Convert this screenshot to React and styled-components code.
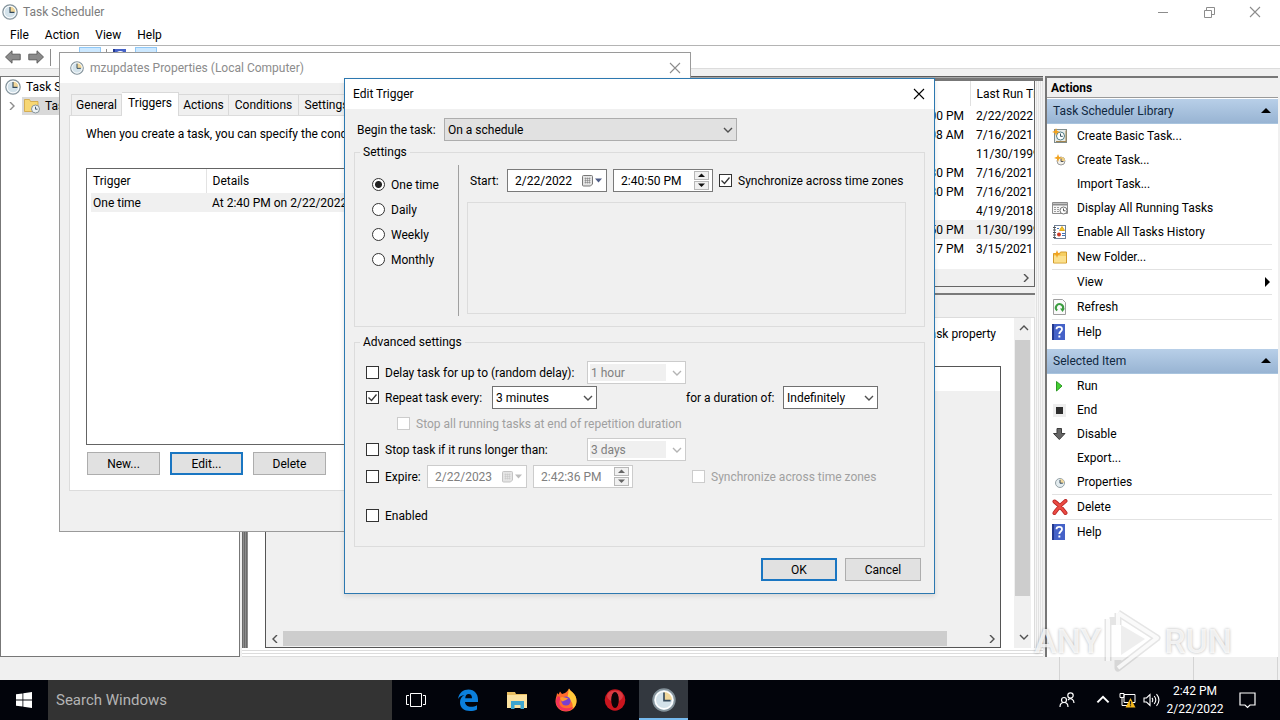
import React from "react";
import styled, { createGlobalStyle, css } from "styled-components";

const FONT = 'Roboto, "Noto Sans", sans-serif';

const GlobalStyle = createGlobalStyle`
  * {
    box-sizing: border-box;
  }

  body {
    margin: 0;
    overflow: hidden;
    font-family: ${FONT};
    font-size: 12px;
    line-height: 16px;
    color: #000;
  }

  button,
  input,
  select {
    font: inherit;
    color: inherit;
    margin: 0;
  }

  svg {
    display: block;
    flex: none;
  }
`;

/* ---------- desktop ---------- */

const Desktop = styled.div`
  position: relative;
  display: flex;
  flex-direction: column;
  height: 100vh;
  overflow: hidden;
  background: #f0f0f0;
`;

const MainWindow = styled.div`
  flex: 1;
  min-height: 0;
  display: flex;
  flex-direction: column;
`;

const TitleBar = styled.header`
  display: flex;
  align-items: center;
  gap: 5px;
  height: 24px;
  padding: 0 2px;
  background: #fff;
  color: #7c7c7c;
`;

const WindowControls = styled.div`
  display: flex;
  margin-left: auto;
`;

const ControlButton = styled.button`
  display: flex;
  align-items: center;
  justify-content: center;
  width: 46px;
  height: 22px;
  padding: 0;
  border: none;
  background: none;
`;

const MenuBar = styled.nav`
  display: flex;
  gap: 16px;
  height: 22px;
  padding: 2px 10px;
  background: #fff;
  border-bottom: 1px solid #b4b4b4;
`;

const MenuItem = styled.button`
  padding: 0;
  border: none;
  background: none;
`;

const Toolbar = styled.div`
  display: flex;
  align-items: center;
  gap: 5px;
  height: 23px;
  padding: 0 4px;
  background: #fff;
  border-bottom: 1px solid #dcdcdc;
`;

const ToolButton = styled.button`
  display: flex;
  align-items: center;
  justify-content: center;
  width: ${(p) => (p.$wide ? "22px" : "18px")};
  height: 21px;
  padding: 0;
  border: 1px solid ${(p) => (p.$active ? "#90c8f6" : "transparent")};
  background: ${(p) => (p.$active ? "#cce8ff" : "none")};
`;

const ToolDivider = styled.span`
  width: 1px;
  height: 17px;
  background: #8c8c8c;
`;

const Panes = styled.div`
  flex: 1;
  min-height: 0;
  display: grid;
  grid-template-columns: 240px minmax(0, 1fr) 235px;
  column-gap: 2px;
  padding-top: 7px;
`;

/* ---------- tree ---------- */

const TreePane = styled.div`
  background: #fff;
  border: 1px solid #777;
`;

const TreeRow = styled.div`
  display: flex;
  align-items: center;
  height: 19px;
  padding-left: ${(p) => (p.$nested ? "6px" : "2px")};
  white-space: nowrap;
`;

const TreeLabel = styled.span`
  display: flex;
  align-items: center;
  gap: 5px;
  height: 18px;
  margin-left: ${(p) => (p.$selected ? "5px" : "0")};
  padding: 0 2px;
  background: ${(p) => (p.$selected ? "#d9d9d9" : "none")};
`;

/* ---------- centre ---------- */

const CenterFrame = styled.div`
  display: flex;
  flex-direction: column;
  min-height: 0;
  padding: 5px 8px 9px 6px;
  background:
    linear-gradient(#5e5e5e 0 1px, #a8a8a8 1px 2px, #777 2px 5px) top / 100% 5px no-repeat,
    repeating-linear-gradient(#fff 0 2px, #dcdcdc 2px 3px) bottom / 100% 9px no-repeat,
    repeating-linear-gradient(90deg, #6a6a6a 0 1px, #8c8c8c 1px 2px) left / 6px 100% no-repeat,
    repeating-linear-gradient(90deg, #f6f6f6 0 1px, #e2e2e2 1px 2px) right / 8px 100% no-repeat;
`;

const ListPane = styled.div`
  display: flex;
  flex-direction: column;
  height: 206px;
  background: #fff;
  border-right: 1px solid #666;
  border-bottom: 1px solid #666;
`;

const TableArea = styled.div`
  flex: 1;
  overflow: hidden;
`;

const TaskTable = styled.table`
  width: 100%;
  table-layout: fixed;
  border-collapse: collapse;
  white-space: nowrap;

  th,
  td {
    padding: 0 6px;
    height: 19px;
    font-weight: 400;
    text-align: left;
    overflow: hidden;
  }

  th {
    height: 25px;
    border-right: 1px solid #e0e0e0;
  }

  th:last-child {
    border-right: none;
  }

  td:nth-child(2) {
    text-align: right;
  }
`;

const TaskRow = styled.tr`
  background: ${(p) => (p.$selected ? "#f0f0f0" : "none")};
`;

const HScroll = styled.div`
  display: flex;
  align-items: center;
  height: 17px;
  background: #f0f0f0;
`;

const HThumb = styled.div`
  flex: 1;
  height: 15px;
  margin-right: 36px;
  background: ${(p) => (p.$hidden ? "none" : "#cdcdcd")};
`;

const ScrollButton = styled.button`
  display: flex;
  align-items: center;
  justify-content: center;
  width: 17px;
  height: 17px;
  padding: 0;
  border: none;
  background: none;
`;

const DetailPane = styled.div`
  flex: 1;
  min-height: 0;
  display: flex;
  flex-direction: column;
  margin-top: 6px;
  padding-top: 22px;
  background: #f0f0f0;
  border-top: 2px solid #7a7a7a;
`;

const DetailScroll = styled.div`
  flex: 1;
  min-height: 0;
  display: flex;
  background: #fff;
  border: 1px solid #dcdcdc;
  border-left: none;
  border-bottom: none;
  padding-right: 3px;
`;

const DetailBody = styled.div`
  flex: 1;
  display: flex;
  flex-direction: column;
  padding: 0 13px 0 17px;
`;

const DetailNote = styled.p`
  height: 48px;
  margin: 0;
  padding: 8px 5px 0;
  text-align: right;
`;

const DetailList = styled.div`
  flex: 1;
  display: flex;
  flex-direction: column;
  justify-content: space-between;
  border: 1px solid #555;
  background: #f0f0f0;
`;

const DetailHeader = styled.div`
  height: 24px;
  background: #fff;
`;

const VScroll = styled.div`
  display: flex;
  flex-direction: column;
  width: 17px;
  padding: 1px 1px 3px;
  background: #f0f0f0;
`;

const VThumb = styled.div`
  flex: 1;
  margin: 4px 0 32px;
  background: #cdcdcd;
`;

/* ---------- actions ---------- */

const ActionsPane = styled.aside`
  margin-right: 2px;
  background: #fff;
  border-top: 2px solid #777;
  border-left: 2px solid #777;
`;

const ActionsTitle = styled.h2`
  height: 20px;
  margin: 0 0 1px;
  padding: 2px 4px;
  font-size: 12px;
  line-height: 16px;
  font-weight: 700;
  background: #f0f0f0;
  border-bottom: 1px solid #9a9a9a;
`;

const SectionHeader = styled.button`
  display: flex;
  align-items: center;
  justify-content: space-between;
  width: 100%;
  height: 25px;
  padding: 0 7px 0 6px;
  border: none;
  border-bottom: 1px solid #a9c4de;
  background: linear-gradient(#b8cfe8, #98b4d3);
  color: #10283f;
`;

const ActionList = styled.ul`
  margin: 0 6px ${(p) => (p.$last ? "0" : "5px")} 5px;
  padding: 0;
  list-style: none;
`;

const ActionItem = styled.li`
  border-top: ${(p) => (p.$separated ? "1px solid #e2e2e2" : "none")};
`;

const ActionButton = styled.button`
  display: grid;
  grid-template-columns: 16px 1fr auto;
  align-items: center;
  column-gap: 9px;
  width: 100%;
  height: 24px;
  padding: 0;
  border: none;
  background: none;
  text-align: left;
`;

const StatusBar = styled.footer`
  display: grid;
  grid-template-columns: 1fr 134px 84px 2px;
  height: 23px;
`;

const StatusCell = styled.span`
  border-right: 1px solid #d4d4d4;
`;

/* ---------- dialogs ---------- */

const Dialog = styled.section`
  position: absolute;
  background: #f0f0f0;
`;

const PropertiesDialog = styled(Dialog)`
  left: 59px;
  top: 52px;
  width: 632px;
  height: 480px;
  border: 1px solid #9a9a9a;
`;

const TriggerDialog = styled(Dialog)`
  left: 344px;
  top: 78px;
  width: 591px;
  border: 1px solid #2c78b0;
  box-shadow: 0 2px 5px rgba(0, 0, 0, 0.12);
`;

const DialogTitle = styled.header`
  display: flex;
  align-items: center;
  gap: ${(p) => (p.$inactive ? "6px" : "0")};
  height: 30px;
  padding: 0 8px 0 ${(p) => (p.$inactive ? "10px" : "8px")};
  background: #fff;
  color: ${(p) => (p.$inactive ? "#8c8c8c" : "#000")};
`;

const CloseButton = styled.button`
  display: flex;
  align-items: center;
  justify-content: center;
  width: 14px;
  height: 20px;
  margin-left: auto;
  padding: 0;
  border: none;
  background: none;
`;

const Tabs = styled.div`
  display: flex;
  align-items: flex-end;
  height: 32px;
  padding-left: 11px;
`;

const Tab = styled.button`
  flex: none;
  width: ${(p) => p.$width}px;
  height: 21px;
  padding: 0;
  border: 1px solid #d9d9d9;
  border-left-width: ${(p) => (p.$first ? "1px" : "0")};
  border-bottom: none;
  background: #f0f0f0;

  ${(p) =>
    p.$selected &&
    css`
      height: 24px;
      padding-bottom: 4px;
      margin-bottom: -1px;
      background: #fff;
      z-index: 1;
    `}
`;

const TabPage = styled.div`
  height: 376px;
  margin: 0 9px;
  padding: 10px 16px;
  background: #fff;
  border: 1px solid #dcdcdc;
`;

const TabNote = styled.p`
  margin: 0 0 26px;
  white-space: nowrap;
`;

const TriggerList = styled.div`
  height: 277px;
  padding-left: 4px;
  border: 1px solid #646464;
`;

const TriggerTable = styled.table`
  width: 100%;
  table-layout: fixed;
  border-collapse: collapse;
  white-space: nowrap;

  th,
  td {
    height: 19px;
    padding: 0 2px;
    font-weight: 400;
    text-align: left;
  }

  th {
    height: 24px;
  }

  th + th,
  td + td {
    padding-left: 6px;
  }

  th + th {
    border-left: 1px solid #e3e3e3;
  }

  td {
    background: #f0f0f0;
  }
`;

const ButtonRow = styled.div`
  display: flex;
  gap: ${(p) => p.$gap}px;
  justify-content: ${(p) => (p.$end ? "flex-end" : "flex-start")};
  padding: ${(p) => (p.$end ? "11px 4px 12px" : "7px 1px 0")};
`;

const PushButton = styled.button`
  width: ${(p) => (p.$wide ? "76px" : "73px")};
  height: 23px;
  padding: 0;
  background: #e1e1e1;
  border: ${(p) => (p.$primary ? "2px solid #1a76c2" : "1px solid #adadad")};
`;

const TriggerForm = styled.form`
  padding: 9px 9px 0;
`;

const FieldRow = styled.div`
  display: flex;
  align-items: center;
  height: 23px;
  margin-left: ${(p) => p.$indent || 0}px;
  margin-bottom: ${(p) => p.$below || 0}px;
  white-space: nowrap;
`;

const FieldLabel = styled.label`
  flex: none;
  width: ${(p) => p.$width}px;
  margin-left: ${(p) => p.$before || 0}px;
`;

const Group = styled.fieldset`
  min-width: 0;
  margin: ${(p) => p.$above}px 0 0;
  padding: 0;
  border: 1px solid #dcdcdc;
`;

const Legend = styled.legend`
  height: 16px;
  margin-left: 5px;
  padding: 0 3px;
`;

const SettingsBody = styled.div`
  display: flex;
  padding-bottom: 10px;
`;

const RadioColumn = styled.div`
  flex: none;
  width: 103px;
  padding: 12px 0 0 17px;
`;

const Choice = styled.label`
  display: flex;
  align-items: center;
  gap: 6px;
  flex: none;
  width: ${(p) => (p.$width ? p.$width + "px" : "auto")};
  height: ${(p) => (p.$tall ? "25px" : "23px")};
  margin-left: ${(p) => p.$before || 0}px;
  color: ${(p) => (p.$disabled ? "#a0a0a0" : "#000")};
`;

const Radio = styled.input`
  appearance: none;
  width: 13px;
  height: 13px;
  border: 1px solid #333;
  border-radius: 50%;
  background: #fff;

  &:checked {
    background: radial-gradient(circle, #222 0 3px, #fff 4px);
  }
`;

const CheckInput = styled.input`
  appearance: none;
  width: 13px;
  height: 13px;
  border: 1px solid #333;
  background: #fff;

  &:checked {
    background: #fff
      url("data:image/svg+xml,%3Csvg xmlns='http://www.w3.org/2000/svg' viewBox='0 0 11 11'%3E%3Cpath d='M1.5 5.5l3 3 5-6' fill='none' stroke='%23333' stroke-width='1.3'/%3E%3C/svg%3E");
  }

  &:disabled {
    border-color: #ccc;
  }
`;

const SchedulePane = styled.div`
  flex: 1;
  min-width: 0;
  margin: 5px 18px 0 0;
  padding: 4px 0 2px 8px;
  border-left: 1px solid #a0a0a0;
`;

const EmptyFrame = styled.div`
  height: 112px;
  margin-top: 10px;
  border: 1px solid #dcdcdc;
`;

const AdvancedBody = styled.div`
  padding: 11px 11px 19px;
`;

const SelectBox = styled.div`
  position: relative;
  flex: none;
  width: ${(p) => p.$width}px;
  height: 23px;

  svg {
    position: absolute;
    right: 4px;
    top: 8px;
    pointer-events: none;
  }
`;

const SelectInput = styled.select`
  appearance: none;
  width: 100%;
  height: 23px;
  padding: 0 20px 0 3px;
  border: 1px solid ${(p) => (p.$flat ? "#adadad" : "#707070")};
  border-radius: 0;
  background: ${(p) => (p.$flat ? "#e1e1e1" : "#fff")};

  &:disabled {
    opacity: 1;
    color: #808080;
    border-color: #ccc;
    background: linear-gradient(#f0f0f0, #f0f0f0) 2px 2px / 76px 17px no-repeat #fff;
  }
`;

const PickerBox = styled.div`
  display: flex;
  align-items: center;
  flex: none;
  width: 100px;
  height: 23px;
  margin-right: 6px;
  padding-right: 3px;
  background: #fff;
  border: 1px solid ${(p) => (p.$disabled ? "#ccc" : "#7a7a7a")};
  color: ${(p) => (p.$disabled ? "#808080" : "#000")};
`;

const PickerInput = styled.input`
  flex: 1;
  min-width: 0;
  padding: 0 0 0 7px;
  border: none;
  background: none;
`;

const CalendarButton = styled.button`
  display: flex;
  align-items: center;
  padding: 0;
  border: none;
  background: none;
`;

const Spinner = styled.span`
  display: flex;
  flex-direction: column;
  gap: 1px;
`;

const SpinButton = styled.button`
  display: flex;
  align-items: center;
  justify-content: center;
  width: 15px;
  height: 9px;
  padding: 0;
  border: 1px solid #b8b8b8;
  background: #f0f0f0;
`;

/* ---------- watermark ---------- */

const Watermark = styled.div`
  position: absolute;
  right: 48px;
  bottom: 48px;
  display: flex;
  align-items: center;
  gap: 3px;
  font-family: "Liberation Sans Narrow", Roboto, sans-serif;
  font-size: 34px;
  font-weight: 500;
  line-height: 62px;
  color: rgba(255, 255, 255, 0.8);
  text-shadow: 0 0 3px rgba(0, 0, 0, 0.3);
  pointer-events: none;
`;

/* ---------- taskbar ---------- */

const Taskbar = styled.div`
  display: flex;
  height: 40px;
  background: #02040b;
  color: #fff;
`;

const TaskbarApps = styled.div`
  display: flex;
  margin-left: 3px;
`;

const TaskbarButton = styled.button`
  display: flex;
  align-items: center;
  justify-content: center;
  width: ${(p) => p.$width || 49}px;
  height: 40px;
  padding: ${(p) => (p.$active ? "2px 0 0" : "0")};
  border: none;
  border-bottom: ${(p) => (p.$active ? "2px solid #76b9ed" : "none")};
  background: ${(p) => (p.$active ? "#33383f" : "none")};
`;

const SearchBox = styled.input`
  width: 344px;
  padding: 0 8px;
  border: none;
  background: #333;
  font-size: 15px;

  &::placeholder {
    color: #b4b4b4;
    opacity: 1;
  }
`;

const Tray = styled.div`
  display: flex;
  align-items: center;
  margin-left: auto;
  padding-right: 13px;
`;

const Clock = styled.time`
  width: 64px;
  line-height: 18px;
  text-align: center;
`;

/* ---------- icons ---------- */

const ClockIcon = ({ size = 16 }) => (
  <svg width={size} height={size} viewBox="0 0 16 16">
    <circle cx="8" cy="8" r="7.2" fill="#d3e2ea" stroke="#84929a" strokeWidth="1.2" />
    <path d="M8 8V2a6 6 0 0 1 6 6z" fill="#f0d79b" />
    <circle cx="8" cy="8" r="5.8" fill="none" stroke="#fff" strokeWidth="0.9" />
    <path d="M8 3v5.4h4.4" fill="none" stroke="#34495a" strokeWidth="1.1" />
  </svg>
);

const CrossIcon = ({ color }) => (
  <svg width="12" height="12" viewBox="0 0 12 12">
    <path d="M1 1l10 10M11 1L1 11" stroke={color} strokeWidth="1.1" />
  </svg>
);

const ArrowIcon = ({ flip }) => (
  <svg width="16" height="14" viewBox="0 0 16 14">
    <path
      d={flip ? "M15.5 7L9 .8v3.4H.8v5.6H9v3.4z" : "M.5 7L7 .8v3.4h8.2v5.6H7v3.4z"}
      fill="#8b8b8b"
      stroke="#5f5f5f"
    />
  </svg>
);

const ChevronIcon = ({ dir = "down", color = "#505050", size = 10 }) => {
  const turn = { down: 0, left: 90, up: 180, right: 270 }[dir];
  return (
    <svg width={size} height={size * 0.8} viewBox="0 0 10 8">
      <path d="M1 2l4 4 4-4" fill="none" stroke={color} strokeWidth="1.4" transform={`rotate(${turn} 5 4)`} />
    </svg>
  );
};

const TriangleIcon = ({ dir = "down", color = "#222", size = 7 }) => {
  const d = { up: "M0 7L5 2l5 5z", down: "M0 2l5 5 5-5z", right: "M3 0l5 5-5 5z" }[dir];
  return (
    <svg width={size} height={size} viewBox="0 0 10 10">
      <path d={d} fill={color} />
    </svg>
  );
};

const CalendarIcon = ({ color, grid }) => (
  <svg width="22" height="14" viewBox="0 0 22 14">
    <path d="M2.500 1.500h8q1 0 1 1v7.500l-2 2h-7q-1 0-1-1v-8.500q0-1 1-1z" fill="#e4e4e4" stroke={grid} />
    <path d="M3.500 4.500h6M3.500 6.500h6M3.500 8.500h6M4.500 3.500v6M6.500 3.500v6M8.500 3.500v6" stroke={grid} strokeWidth="0.5" />
    <path d="M14 4.500h7l-3.500 4z" fill={color} />
  </svg>
);

const TreeFolderIcon = () => (
  <svg width="16" height="16" viewBox="0 0 16 16">
    <path d="M.5 1.500h5l1 2h7.500v10H.5z" fill="#f7d774" stroke="#d0a33c" strokeWidth="0.8" />
    <circle cx="11.500" cy="11" r="4" fill="#eef3f5" stroke="#84929a" />
    <path d="M11.500 8.700v2.500h2" fill="none" stroke="#34495a" strokeWidth="0.9" />
  </svg>
);

const Star = () => <path d="M4 0l1 2.800L8 4 5 5 4 8 3 5 0 4l3-1.200z" fill="#f2a21c" />;

const BasicTaskIcon = () => (
  <svg width="16" height="16" viewBox="0 0 16 16">
    <rect x="2.500" y="1.500" width="12" height="13" fill="#e8ecea" stroke="#7f8b8c" />
    <path d="M4 13.500h10v-11" fill="none" stroke="#a4864f" />
    <circle cx="8.500" cy="8" r="4" fill="#fff" stroke="#4f7d86" />
    <path d="M8.500 5.500V8.300h2.300" fill="none" stroke="#33525e" />
    <Star />
  </svg>
);

const NewTaskIcon = () => (
  <svg width="16" height="16" viewBox="0 0 16 16">
    <circle cx="9" cy="9" r="4" fill="#f3f1ea" stroke="#9c9c9c" />
    <path d="M9 9V5a4 4 0 0 1 4 4z" fill="#f0cf80" />
    <path d="M9 6.500v3h2.500" fill="none" stroke="#555" />
    <g transform="translate(2 2)">
      <Star />
    </g>
  </svg>
);

const RunningIcon = () => (
  <svg width="16" height="16" viewBox="0 0 16 16">
    <path d="M.5 2.500h15v11H.5z" fill="#f5f5f5" stroke="#8c8c8c" />
    <path d="M1 4.500h14" stroke="#8c8c8c" strokeWidth="2" />
    <path d="M2 7.500h5M2 9.500h5M2 11.500h5" stroke="#9d9d9d" strokeDasharray="2 1" />
    <circle cx="11.500" cy="10.500" r="3.500" fill="#fff" stroke="#777" />
    <path d="M11.500 8.500v2.300h2" fill="none" stroke="#555" />
  </svg>
);

const HistoryIcon = () => (
  <svg width="16" height="16" viewBox="0 0 16 16">
    <rect x="2.500" y="1.500" width="11" height="13" fill="#fff" stroke="#6f8096" />
    <path d="M1 3.500h3M1 6h3M1 8.500h3M1 11h3M1 13.500h3" stroke="#555" />
    <path d="M10 2.500l2.500 4h-5z" fill="#f3c62c" stroke="#e0ab1a" />
    <circle cx="7" cy="10.500" r="2" fill="#cc3b26" />
    <path d="M5 4.500h2M10 9.500h3M10 11.500h3" stroke="#3f72b8" />
  </svg>
);

const NewFolderIcon = () => (
  <svg width="16" height="16" viewBox="0 0 16 16">
    <path d="M1.500 4.500h6l1-1.500h6v11h-13z" fill="#f6cf63" stroke="#d29b2d" />
    <path d="M2 7h12v6.500H2z" fill="#fbe08d" />
    <g transform="translate(1 1)">
      <Star />
    </g>
  </svg>
);

const RefreshIcon = () => (
  <svg width="16" height="16" viewBox="0 0 16 16">
    <path d="M1.500.500h9l3 3v12h-12z" fill="#fafafa" stroke="#9e9e9e" />
    <path d="M5.200 11.500A3.600 3.600 0 1 1 10.600 10.500" fill="none" stroke="#3b9c3f" strokeWidth="2" />
    <path d="M8 9.500h5L10.500 13z" fill="#3b9c3f" />
  </svg>
);

const HelpIcon = () => (
  <svg width="16" height="16" viewBox="0 0 16 16">
    <rect x="0" y="0" width="13" height="16" fill="#4562c8" />
    <path d="M1 0v16" stroke="#24398f" strokeWidth="2" />
    <path d="M4.500 5.200C4.500 2.200 10 2.200 10 5.200 10 7.500 7.300 7.500 7.300 10" fill="none" stroke="#fff" strokeWidth="1.800" />
    <rect x="6.400" y="11.500" width="1.900" height="2" fill="#fff" />
  </svg>
);

const RunIcon = () => (
  <svg width="16" height="16" viewBox="0 0 16 16">
    <path d="M4.500 3.500L10 8l-5.500 5z" fill="#45cf33" stroke="#2b9a23" />
  </svg>
);

const EndIcon = () => (
  <svg width="16" height="16" viewBox="0 0 16 16">
    <rect x="1" y="2" width="13" height="13" fill="#eee" />
    <rect x="4" y="5" width="7" height="7" fill="#2e2e2e" />
  </svg>
);

const DisableIcon = () => (
  <svg width="16" height="16" viewBox="0 0 16 16">
    <path d="M5 2.500h4.500v5h3.500L7.300 13.500 1.500 7.500H5z" fill="#666" stroke="#3c3c3c" />
  </svg>
);

const PropertiesIcon = () => (
  <svg width="16" height="16" viewBox="0 0 16 16">
    <circle cx="8" cy="9" r="4.500" fill="#e3ecef" stroke="#95a1a6" />
    <path d="M8 9V5a4 4 0 0 1 4 4z" fill="#f0d79b" />
    <path d="M8 6v3.200h2.800" fill="none" stroke="#34495a" />
  </svg>
);

const DeleteIcon = () => (
  <svg width="16" height="16" viewBox="0 0 16 16">
    <path d="M2.500 2.500C6 5 10 9.500 13.500 14M13.500 2C9 5.500 5.500 9.500 2.500 14" stroke="#b52424" strokeWidth="4" strokeLinecap="round" />
    <path d="M2.500 2.500C6 5 10 9.500 13.500 14M13.500 2C9 5.500 5.500 9.500 2.500 14" stroke="#ea4a42" strokeWidth="2.400" strokeLinecap="round" />
  </svg>
);

const PlayMark = () => (
  <svg width="57" height="62" viewBox="0 0 57 62" fill="none" strokeLinejoin="round">
    <path d="M14 3L53 28 14 58V50M14 3v12M4 9v42M9 7v8" stroke="rgba(0,0,0,.1)" strokeWidth="7" />
    <path d="M14 3L53 28 14 58M14 3v12M4 9v42" stroke="rgba(255,255,255,.8)" strokeWidth="4" />
    <path d="M17 15l24 14-24 16z" fill="rgba(222,222,222,.5)" />
  </svg>
);

const WindowsLogo = () => (
  <svg width="16" height="16" viewBox="0 0 16 16" fill="#fff">
    <path d="M0 2.300L6.500 1.400v6.200H0zM7.300 1.300L16 0v7.600H7.300zM0 8.400h6.500v6.200L0 13.700zM7.300 8.400H16V16l-8.700-1.300z" />
  </svg>
);

const TaskViewIcon = () => (
  <svg width="20" height="14" viewBox="0 0 20 14" fill="none" stroke="#fff">
    <path d="M4.500.500h11v13h-11zM3 2.500H.500v9H3M17 2.500h2.500v9H17" />
  </svg>
);

const EdgeIcon = () => (
  <svg width="22" height="22" viewBox="0 0 22 22">
    <path
      d="M1 10C2 3.500 6.500.500 11.500.500 17.500.500 21 5 21 10.500V13H8c.3 3.500 3.200 4.800 6 4.800 2.300 0 4.200-.6 6-1.600v4.200c-2 1-4.200 1.600-7 1.600C7 22 3 18.500 3 13.500 3 10 4.500 7.500 7.500 6 4.500 6.300 2.300 7.700 1 10zM8.200 9.200H15c0-2.600-1.200-4.200-3.300-4.200S8.400 6.600 8.200 9.200z"
      fill="#0b7fdb"
    />
  </svg>
);

const ExplorerIcon = () => (
  <svg width="22" height="20" viewBox="0 0 22 20">
    <path d="M1 2h8l1 2h11v14H1z" fill="#e9bf62" />
    <path d="M1 5h20v13H1z" fill="#fbe2a0" />
    <path d="M5 19v-8h13v8h-3.500v-4h-6v4z" fill="#3ea6cf" />
  </svg>
);

const FirefoxIcon = () => (
  <svg width="24" height="24" viewBox="0 0 24 24">
    <path d="M3 5l1.500 1.500L6 3.500 8 6l3-1C13 4 14 2 15 .500c1 3 7.500 5 7.500 12.500C22.500 19 18 23.500 12 23.500S1.500 19 1.500 13C1.500 9.500 3 7.500 3 5z" fill="#ff6b2c" />
    <path d="M15 .500c1 3 7.500 5 7.500 12.500 0 3-1.500 6-4 8 1-5-1-9-5.500-11 1.500-3 1-6 2-9.500z" fill="#ffc83a" />
    <path d="M2 15c1.500 6 6.500 8.500 11 8 3-.4 5-2 6-4-5 2-11 2-13-2-1.500-3 0-6 2-7L4 8c-1.500 2-2.500 4-2 7z" fill="#f4335a" />
    <circle cx="12" cy="13" r="4.600" fill="#7a3fd0" />
    <path d="M6 9.500c3-1.500 5 .5 8 .5-1 2.500-4 2-5 3.500C7.500 13 6 11.500 6 9.500z" fill="#ff9a2e" />
  </svg>
);

const OperaIcon = () => (
  <svg width="22" height="22" viewBox="0 0 22 22">
    <ellipse cx="11" cy="11" rx="10.300" ry="10.700" fill="#c9151e" />
    <ellipse cx="11" cy="7" rx="8" ry="5.500" fill="#e4555a" opacity="0.6" />
    <ellipse cx="11" cy="11" rx="3.800" ry="8" fill="#0a0407" />
  </svg>
);

const PeopleIcon = () => (
  <svg width="16" height="16" viewBox="0 0 16 16" fill="none" stroke="#fff" strokeWidth="1.200">
    <circle cx="5" cy="8" r="2.500" />
    <path d="M1 15c0-6 8-6 8 0" />
    <circle cx="11.500" cy="3.500" r="2.700" />
    <path d="M9 8c3-3 6 0 6 3" />
  </svg>
);

const NetworkIcon = () => (
  <svg width="17" height="16" viewBox="0 0 17 16">
    <path d="M5 2.500h11v8H5zM3 6v7.500h6M1 1.500h4v4H1z" fill="none" stroke="#fff" />
    <path d="M11.500 6l5 9.500h-10z" fill="#f5b81c" />
    <path d="M11.500 9v3.500M11.500 13.300v1" stroke="#222" strokeWidth="1.200" />
  </svg>
);

const VolumeIcon = () => (
  <svg width="17" height="14" viewBox="0 0 17 14" fill="none" stroke="#fff" strokeWidth="1.100">
    <path d="M1 5h2.500L7 1.500v11L3.500 9H1zM9 5c1 1 1 3 0 4M11.200 3c2 2.500 2 5.500 0 8M13.500 1.200c3 3.500 3 8 0 11.600" />
  </svg>
);

const NoticeIcon = () => (
  <svg width="17" height="17" viewBox="0 0 17 17" fill="none" stroke="#fff" strokeWidth="1.200">
    <path d="M1 1h15v12h-5L8.500 15.500 6 13H1z" />
  </svg>
);

/* ---------- data ---------- */

const tasks = [
  { next: "2/22/2022 3:00:00 PM", last: "2/22/2022 2:40:51 PM" },
  { next: "2/23/2022 1:10:08 AM", last: "7/16/2021 1:10:08 AM" },
  { next: "", last: "11/30/1999 12:00:00 AM" },
  { next: "2/22/2022 4:12:30 PM", last: "7/16/2021 1:12:30 PM" },
  { next: "2/22/2022 4:42:30 PM", last: "7/16/2021 1:42:30 PM" },
  { next: "", last: "4/19/2018 6:21:07 AM" },
  { next: "2/22/2022 2:40:50 PM", last: "11/30/1999 12:00:00 AM", selected: true },
  { next: "2/22/2022 5:01:17 PM", last: "3/15/2021 8:04:17 PM" },
];

const libraryActions = [
  { label: "Create Basic Task...", icon: <BasicTaskIcon /> },
  { label: "Create Task...", icon: <NewTaskIcon /> },
  { label: "Import Task..." },
  { label: "Display All Running Tasks", icon: <RunningIcon /> },
  { label: "Enable All Tasks History", icon: <HistoryIcon /> },
  { label: "New Folder...", icon: <NewFolderIcon />, separated: true },
  { label: "View", separated: true, submenu: true },
  { label: "Refresh", icon: <RefreshIcon />, separated: true },
  { label: "Help", icon: <HelpIcon />, separated: true },
];

const itemActions = [
  { label: "Run", icon: <RunIcon /> },
  { label: "End", icon: <EndIcon /> },
  { label: "Disable", icon: <DisableIcon /> },
  { label: "Export..." },
  { label: "Properties", icon: <PropertiesIcon /> },
  { label: "Delete", icon: <DeleteIcon />, separated: true },
  { label: "Help", icon: <HelpIcon />, separated: true },
];

const tabs = [
  { label: "General", width: 51 },
  { label: "Triggers", width: 57, selected: true },
  { label: "Actions", width: 50 },
  { label: "Conditions", width: 70 },
  { label: "Settings", width: 56 },
];

/* ---------- parts ---------- */

const Check = ({ label, checked, disabled, width, before }) => (
  <Choice $width={width} $before={before} $disabled={disabled}>
    <CheckInput type="checkbox" defaultChecked={checked} disabled={disabled} />
    {label}
  </Choice>
);

const Select = ({ id, label, value, width, flat, disabled }) => (
  <SelectBox $width={width}>
    <SelectInput id={id} aria-label={label} $flat={flat} disabled={disabled}>
      <option>{value}</option>
    </SelectInput>
    <ChevronIcon color={disabled ? "#b4b4b4" : "#505050"} />
  </SelectBox>
);

const DatePicker = ({ id, label, value, disabled }) => (
  <PickerBox $disabled={disabled}>
    <PickerInput id={id} aria-label={label} defaultValue={value} disabled={disabled} />
    <CalendarButton type="button" aria-label="Open calendar" disabled={disabled}>
      <CalendarIcon color={disabled ? "#bdbdbd" : "#4f5d86"} grid={disabled ? "#c4c4c4" : "#777"} />
    </CalendarButton>
  </PickerBox>
);

const TimePicker = ({ label, value, disabled }) => (
  <PickerBox $disabled={disabled}>
    <PickerInput aria-label={label} defaultValue={value} disabled={disabled} />
    <Spinner>
      <SpinButton type="button" aria-label="Later">
        <TriangleIcon dir="up" color={disabled ? "#666" : "#111"} />
      </SpinButton>
      <SpinButton type="button" aria-label="Earlier">
        <TriangleIcon color={disabled ? "#666" : "#111"} />
      </SpinButton>
    </Spinner>
  </PickerBox>
);

const ActionSection = ({ title, items, last }) => (
  <>
    <SectionHeader>
      {title}
      <TriangleIcon dir="up" color="#000" size={10} />
    </SectionHeader>
    <ActionList $last={last}>
      {items.map((item) => (
        <ActionItem key={item.label} $separated={item.separated}>
          <ActionButton>
            <span>{item.icon}</span>
            {item.label}
            {item.submenu && <TriangleIcon dir="right" color="#000" size={10} />}
          </ActionButton>
        </ActionItem>
      ))}
    </ActionList>
  </>
);

const Scheduler = () => (
  <MainWindow>
    <TitleBar>
      <ClockIcon />
      Task Scheduler
      <WindowControls>
        <ControlButton aria-label="Minimize">
          <svg width="10" height="10">
            <path d="M0 5.500h10" stroke="#8c8c8c" />
          </svg>
        </ControlButton>
        <ControlButton aria-label="Restore">
          <svg width="11" height="11" fill="none" stroke="#8c8c8c">
            <path d="M.500 3.500h7v7h-7zM2.500 3V.500h8v7H8" />
          </svg>
        </ControlButton>
        <ControlButton aria-label="Close">
          <CrossIcon color="#8c8c8c" />
        </ControlButton>
      </WindowControls>
    </TitleBar>
    <MenuBar>
      <MenuItem>File</MenuItem>
      <MenuItem>Action</MenuItem>
      <MenuItem>View</MenuItem>
      <MenuItem>Help</MenuItem>
    </MenuBar>
    <Toolbar>
      <ToolButton aria-label="Back">
        <ArrowIcon />
      </ToolButton>
      <ToolButton aria-label="Forward">
        <ArrowIcon flip />
      </ToolButton>
      <ToolDivider />
      <ToolButton aria-label="Up" />
      <ToolButton aria-label="Show tree" $active $wide />
      <ToolDivider />
      <ToolButton aria-label="Help">
        <HelpIcon />
      </ToolButton>
      <ToolButton aria-label="Show actions" $active $wide />
    </Toolbar>
    <Panes>
      <TreePane>
        <TreeRow>
          <TreeLabel>
            <ClockIcon />
            Task Scheduler (Local)
          </TreeLabel>
        </TreeRow>
        <TreeRow $nested>
          <ChevronIcon dir="right" color="#8c8c8c" />
          <TreeLabel $selected>
            <TreeFolderIcon />
            Task Scheduler Library
          </TreeLabel>
        </TreeRow>
      </TreePane>
      <CenterFrame>
        <ListPane>
          <TableArea>
            <TaskTable>
              <colgroup>
                <col />
                <col width="180" />
                <col width="64" />
              </colgroup>
              <thead>
                <tr>
                  <th />
                  <th>Next Run Time</th>
                  <th>Last Run Time</th>
                </tr>
              </thead>
              <tbody>
                {tasks.map((task, i) => (
                  <TaskRow key={i} $selected={task.selected}>
                    <td />
                    <td>{task.next}</td>
                    <td>{task.last}</td>
                  </TaskRow>
                ))}
              </tbody>
            </TaskTable>
          </TableArea>
          <HScroll>
            <HThumb $hidden />
            <ScrollButton aria-label="Scroll right">
              <ChevronIcon dir="right" />
            </ScrollButton>
          </HScroll>
        </ListPane>
        <DetailPane>
          <DetailScroll>
            <DetailBody>
              <DetailNote>To change these triggers, open the task property</DetailNote>
              <DetailList>
                <DetailHeader />
                <HScroll>
                  <ScrollButton aria-label="Scroll left">
                    <ChevronIcon dir="left" />
                  </ScrollButton>
                  <HThumb />
                  <ScrollButton aria-label="Scroll right">
                    <ChevronIcon dir="right" />
                  </ScrollButton>
                </HScroll>
              </DetailList>
            </DetailBody>
            <VScroll>
              <ScrollButton aria-label="Scroll up">
                <ChevronIcon dir="up" />
              </ScrollButton>
              <VThumb />
              <ScrollButton aria-label="Scroll down">
                <ChevronIcon />
              </ScrollButton>
            </VScroll>
          </DetailScroll>
        </DetailPane>
      </CenterFrame>
      <ActionsPane>
        <ActionsTitle>Actions</ActionsTitle>
        <ActionSection title="Task Scheduler Library" items={libraryActions} />
        <ActionSection title="Selected Item" items={itemActions} last />
      </ActionsPane>
    </Panes>
    <StatusBar>
      <StatusCell />
      <StatusCell />
      <StatusCell />
    </StatusBar>
  </MainWindow>
);

const Properties = () => (
  <PropertiesDialog>
    <DialogTitle $inactive>
      <ClockIcon size={14} />
      mzupdates Properties (Local Computer)
      <CloseButton aria-label="Close">
        <CrossIcon color="#8c8c8c" />
      </CloseButton>
    </DialogTitle>
    <Tabs>
      {tabs.map((tab, i) => (
        <Tab key={tab.label} $width={tab.width} $first={i === 0} $selected={tab.selected}>
          {tab.label}
        </Tab>
      ))}
    </Tabs>
    <TabPage>
      <TabNote>When you create a task, you can specify the conditions that will trigger the task.</TabNote>
      <TriggerList>
        <TriggerTable>
          <colgroup>
            <col width="115" />
            <col />
          </colgroup>
          <thead>
            <tr>
              <th>Trigger</th>
              <th>Details</th>
            </tr>
          </thead>
          <tbody>
            <tr>
              <td>One time</td>
              <td>At 2:40 PM on 2/22/2022</td>
            </tr>
          </tbody>
        </TriggerTable>
      </TriggerList>
      <ButtonRow $gap={10}>
        <PushButton>New...</PushButton>
        <PushButton $primary>Edit...</PushButton>
        <PushButton>Delete</PushButton>
      </ButtonRow>
    </TabPage>
  </PropertiesDialog>
);

const EditTrigger = () => (
  <TriggerDialog>
    <DialogTitle>
      Edit Trigger
      <CloseButton aria-label="Close">
        <CrossIcon color="#000" />
      </CloseButton>
    </DialogTitle>
    <TriggerForm onSubmit={(e) => e.preventDefault()}>
      <FieldRow $indent={3}>
        <FieldLabel htmlFor="begin" $width={87}>
          Begin the task:
        </FieldLabel>
        <Select id="begin" value="On a schedule" width={293} flat />
      </FieldRow>
      <Group $above={3}>
        <Legend>Settings</Legend>
        <SettingsBody>
          <RadioColumn>
            {["One time", "Daily", "Weekly", "Monthly"].map((label, i) => (
              <Choice key={label} $tall>
                <Radio type="radio" name="frequency" defaultChecked={i === 0} />
                {label}
              </Choice>
            ))}
          </RadioColumn>
          <SchedulePane>
            <FieldRow $indent={3}>
              <FieldLabel htmlFor="start" $width={37}>
                Start:
              </FieldLabel>
              <DatePicker id="start" value="2/22/2022" />
              <TimePicker label="Start time" value="2:40:50 PM" />
              <Check label="Synchronize across time zones" checked />
            </FieldRow>
            <EmptyFrame />
          </SchedulePane>
        </SettingsBody>
      </Group>
      <Group $above={7}>
        <Legend>Advanced settings</Legend>
        <AdvancedBody>
          <FieldRow $below={2}>
            <Check label="Delay task for up to (random delay):" width={221} />
            <Select label="Random delay" value="1 hour" width={99} disabled />
          </FieldRow>
          <FieldRow $below={3}>
            <Check label="Repeat task every:" width={126} checked />
            <Select label="Repeat interval" value="3 minutes" width={105} />
            <FieldLabel htmlFor="duration" $width={97} $before={89}>
              for a duration of:
            </FieldLabel>
            <Select id="duration" value="Indefinitely" width={95} />
          </FieldRow>
          <FieldRow $indent={31} $below={3}>
            <Check label="Stop all running tasks at end of repetition duration" disabled />
          </FieldRow>
          <FieldRow $below={4}>
            <Check label="Stop task if it runs longer than:" width={221} />
            <Select label="Longest run" value="3 days" width={99} disabled />
          </FieldRow>
          <FieldRow $below={16}>
            <Check label="Expire:" width={61} />
            <DatePicker label="Expiry date" value="2/22/2023" disabled />
            <TimePicker label="Expiry time" value="2:42:36 PM" disabled />
            <Check label="Synchronize across time zones" before={53} disabled />
          </FieldRow>
          <FieldRow>
            <Check label="Enabled" />
          </FieldRow>
        </AdvancedBody>
      </Group>
      <ButtonRow $gap={8} $end>
        <PushButton $wide $primary>
          OK
        </PushButton>
        <PushButton $wide>Cancel</PushButton>
      </ButtonRow>
    </TriggerForm>
  </TriggerDialog>
);

const App = () => {
  return (
    <Desktop>
      <GlobalStyle />
      <Scheduler />
      <Properties />
      <EditTrigger />
      <Taskbar>
        <TaskbarButton $width={48} aria-label="Start">
          <WindowsLogo />
        </TaskbarButton>
        <SearchBox aria-label="Search Windows" placeholder="Search Windows" />
        <TaskbarButton $width={48} aria-label="Task view">
          <TaskViewIcon />
        </TaskbarButton>
        <TaskbarApps>
          <TaskbarButton aria-label="Edge">
            <EdgeIcon />
          </TaskbarButton>
          <TaskbarButton aria-label="File Explorer">
            <ExplorerIcon />
          </TaskbarButton>
          <TaskbarButton aria-label="Firefox">
            <FirefoxIcon />
          </TaskbarButton>
          <TaskbarButton aria-label="Opera">
            <OperaIcon />
          </TaskbarButton>
          <TaskbarButton aria-label="Task Scheduler" $active>
            <ClockIcon size={24} />
          </TaskbarButton>
        </TaskbarApps>
        <Tray>
          <TaskbarButton $width={48} aria-label="People">
            <PeopleIcon />
          </TaskbarButton>
          <TaskbarButton $width={24} aria-label="Hidden icons">
            <ChevronIcon dir="up" color="#fff" size={14} />
          </TaskbarButton>
          <TaskbarButton $width={24} aria-label="Network">
            <NetworkIcon />
          </TaskbarButton>
          <TaskbarButton $width={24} aria-label="Volume">
            <VolumeIcon />
          </TaskbarButton>
          <Clock>
            2:42 PM
            <br />
            2/22/2022
          </Clock>
          <TaskbarButton $width={40} aria-label="Notifications">
            <NoticeIcon />
          </TaskbarButton>
        </Tray>
      </Taskbar>
      <Watermark>
        ANY
        <PlayMark />
        RUN
      </Watermark>
    </Desktop>
  );
};

export default App;
